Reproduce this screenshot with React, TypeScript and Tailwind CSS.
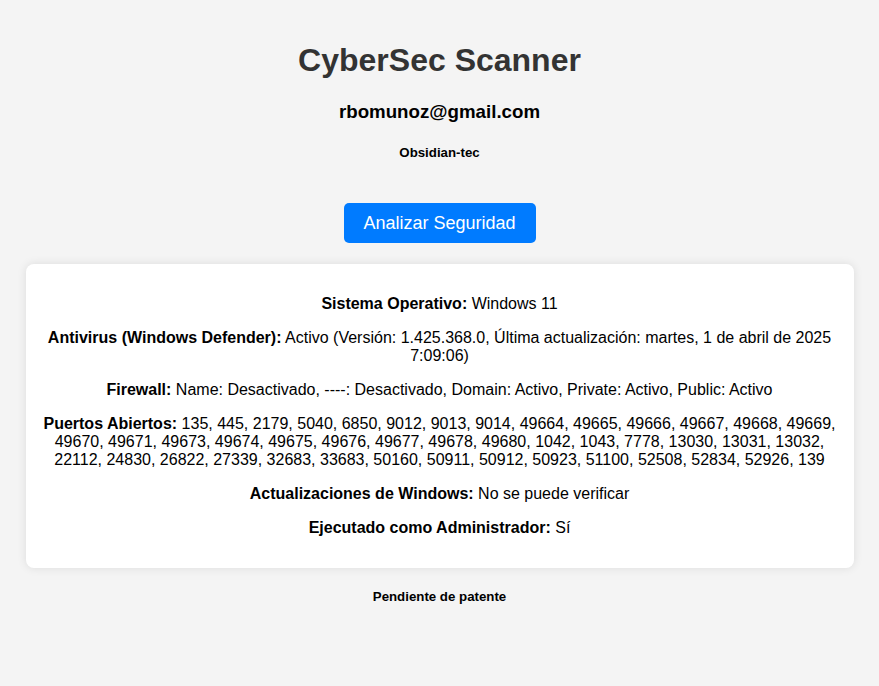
export default function App() {
  const ports =
    "135, 445, 2179, 5040, 6850, 9012, 9013, 9014, 49664, 49665, 49666, 49667, 49668, 49669, 49670, 49671, 49673, 49674, 49675, 49676, 49677, 49678, 49680, 1042, 1043, 7778, 13030, 13031, 13032, 22112, 24830, 26822, 27339, 32683, 33683, 50160, 50911, 50912, 50923, 51100, 52508, 52834, 52926, 139";
  const rows: [string, string][] = [
    ["Sistema Operativo:", "Windows 11"],
    [
      "Antivirus (Windows Defender):",
      "Activo (Versión: 1.425.368.0, Última actualización: martes, 1 de abril de 2025 7:09:06)",
    ],
    [
      "Firewall:",
      "Name: Desactivado, ----: Desactivado, Domain: Activo, Private: Activo, Public: Activo",
    ],
    ["Puertos Abiertos:", ports],
    ["Actualizaciones de Windows:", "No se puede verificar"],
    ["Ejecutado como Administrador:", "Sí"],
  ];
  return (
    <div
      className="min-h-[686px] w-full bg-[#f4f4f4] flex flex-col items-center pt-[42px] text-center leading-[normal]"
      style={{ fontFamily: '"Liberation Sans", Arial, sans-serif' }}
    >
      <h1 className="text-[32px] font-bold text-[#333333] leading-[36px]">CyberSec Scanner</h1>
      <h3 className="mt-[23px] text-[18.72px] font-bold text-black leading-[22px]">rbomunoz@gmail.com</h3>
      <h5 className="mt-[22px] text-[13.28px] font-bold text-black leading-[16px]">Obsidian-tec</h5>
      <button className="mt-[42px] h-[40px] w-[192px] rounded-[5px] bg-[#007bff] text-white text-[18px] leading-[normal]">
        Analizar Seguridad
      </button>
      <div className="mt-[21px] w-[828px] bg-white rounded-[8px] shadow-[0_0_10px_rgba(0,0,0,0.1)] px-4 pt-[15px] pb-[15px]">
        {rows.map(([k, v]) => (
          <p key={k} className="my-4 text-[16px] text-black leading-[18px]">
            <strong className="font-bold">{k}</strong> {v}
          </p>
        ))}
      </div>
      <h5 className="mt-[21px] text-[13.28px] font-bold text-black leading-[16px]">Pendiente de patente</h5>
    </div>
  );
}
